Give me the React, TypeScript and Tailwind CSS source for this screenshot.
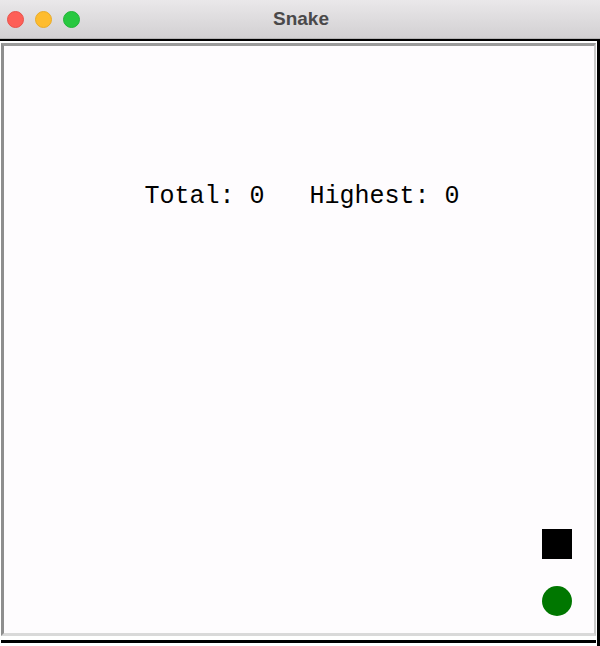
import React from 'react';

const TrafficLight = ({ color, border }: { color: string; border: string }) => (
  <span className={`block h-[17px] w-[17px] rounded-full border ${color} ${border}`} />
);

export default function App() {
  return (
    <div className="flex h-[646px] w-[600px] flex-col overflow-hidden bg-white">
      {/* title bar */}
      <div className="relative flex h-[39px] shrink-0 items-center border-b border-[#b4b3b4] bg-gradient-to-b from-[#eae8ea] to-[#d2d0d2]">
        <div className="absolute left-[7px] top-[11px] flex gap-[11px]">
          <TrafficLight color="bg-[#fe5f57]" border="border-[#e8524b]" />
          <TrafficLight color="bg-[#febc2e]" border="border-[#e9ab28]" />
          <TrafficLight color="bg-[#28c840]" border="border-[#22b537]" />
        </div>
        <div className="w-full pl-[2px] text-center text-[19px] font-bold text-[#4a494a] [font-family:'Liberation_Sans',Arial,sans-serif]">
          Snake
        </div>
      </div>
      <div className="h-[2px] shrink-0 bg-black" />

      {/* body */}
      <div className="flex flex-1 flex-row">
        <div className="flex flex-1 flex-col pt-[2px] pl-[1px] pr-[1px]">
          <div className="flex h-[593px] flex-col border-l-[3px] border-t-[3px] border-r-[2px] border-b-[3px] border-l-[#8e8e8e] border-t-[#9a9a9a] border-r-[#c9c9c9] border-b-[#d9d9d9] bg-[#fefcfe]">
            <div className="mt-[136px] pl-[6px] text-center text-[25px] leading-[30px] text-black [font-family:'Liberation_Mono','Courier_New',monospace] whitespace-pre">
              {'Total: 0   Highest: 0'}
            </div>
            <div className="mt-auto mb-[17px] mr-[22px] flex flex-col items-end gap-[27px] self-end">
              <div className="h-[30px] w-[30px] bg-black" />
              <div className="h-[30px] w-[30px] rounded-full bg-[#007700]" />
            </div>
          </div>
          <div className="mt-[4px] h-[3px] bg-black" />
        </div>
        <div className="w-[3px] bg-black" />
      </div>
    </div>
  );
}
